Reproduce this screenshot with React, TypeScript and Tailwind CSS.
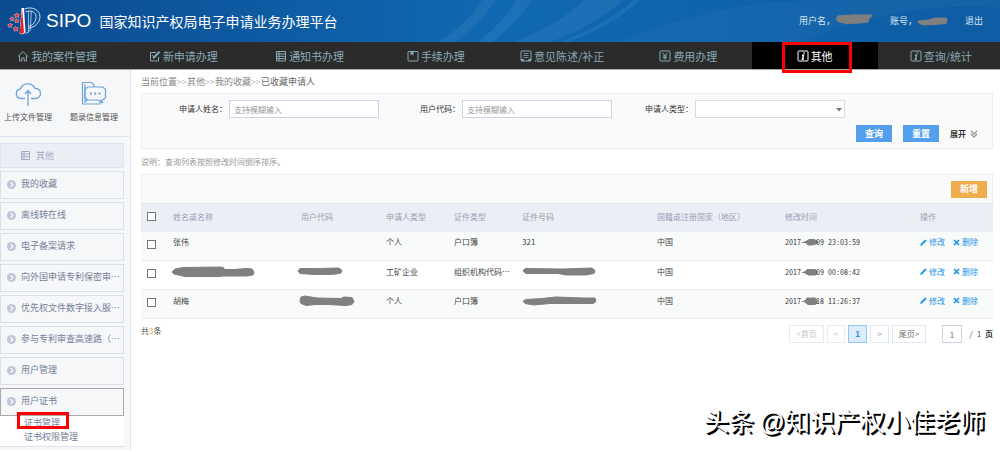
import React from "react";

type IconProps = { className?: string };

function NavIcon({ name }: { name: string }) {
  return (
    <svg viewBox="0 0 12 12" className="size-3 shrink-0" fill="none" stroke="currentColor" strokeWidth="1" aria-hidden="true">
      {name === "home" && <path d="M1 6.5 6 1.5l5 5M2.5 5.5v5.5h2.3V8h2.4v3h2.3V5.5" />}
      {name === "edit" && (
        <>
          <path d="M7 2.500H1.500v8.500h8V7" />
          <path d="M4.200 8.300 10.600 1.600" strokeWidth="2" />
          <path d="M3 5l2.500 3" />
        </>
      )}
      {name === "list" && <path d="M1.500 1.500h9v9.500h-9zM1.500 4h9M1.500 6.300h9M1.500 8.600h9M4 1.500v9.500" />}
      {name === "book" && (
        <>
          <rect x="1" y="1.500" width="10" height="9.500" rx="1" />
          <path d="M3.500 1.500h3v4L5 4.300 3.500 5.500z" fill="currentColor" stroke="none" />
        </>
      )}
      {name === "reply" && (
        <>
          <rect x="1" y="1" width="10" height="10" rx="1" />
          <path d="M3.500 3.500h5M3.500 5.500h5M3.500 7.500h5" strokeWidth="0.8" />
          <path d="M1 9h2.500l.8 2H1zM11 9H8.500l-.8 2H11z" fill="currentColor" stroke="none" />
        </>
      )}
      {name === "fee" && (
        <>
          <rect x="1" y="1" width="10" height="10" rx="1" />
          <path d="M3.500 2.800 6 5.600l2.500-2.800M6 5.600v4M3.800 6h4.400M3.800 7.800h4.400" />
        </>
      )}
      {name === "info" && (
        <>
          <rect x="1" y="1" width="10" height="10" rx="1" />
          <path d="M7.300 2.300 7 3.700M5 5.200h1.500L5.500 9.300h1.300" strokeWidth="1.500" />
        </>
      )}
    </svg>
  );
}

function Logo({ className }: IconProps) {
  return (
    <svg viewBox="0 0 36 30" className={className} aria-hidden="true">
      <g fill="none" stroke="#cfe2f5" strokeWidth="1">
        <path d="M18 2c8-3 16 1 16 8 0 6-5 11-12 12" />
        <path d="M19 5c6-2 11 0 11 5 0 5-3 9-8 10" />
        <path d="M22 4v22c-1 1-3 1-4 1M25 4l-1 20-3 3" strokeWidth="0.8" />
      </g>
      <path d="M15 1h2.500l1.500 24c-1 3-4 3.500-6 3z" fill="#fff" />
      <path d="M15.500 2 17.500 26c-1 2-3 2-4.500 1.500z" fill="#e8202c" />
      <g fill="#ee2b36" stroke="#fff" strokeWidth="0.4">
        <path d="m10 6 1 1.600 1.900.2-1.300 1.300.4 1.900-2-.8-1.600 1 .1-1.900-1.500-1.200 1.900-.5z" />
        <path d="m5 10 .9 1.300 1.500.2-1 1.100.2 1.500-1.500-.6-1.300.8v-1.500l-1.200-1 1.500-.4z" />
        <path d="m10 12 .9 1.300 1.500.2-1 1.100.2 1.500-1.500-.6-1.300.8v-1.500l-1.200-1 1.500-.4z" />
        <path d="m3 16.500 1 1.400 1.600.2-1 1.200.2 1.600-1.600-.6-1.500.8.100-1.600-1.300-1.100 1.600-.4z" />
        <path d="m9 20 1 1.600 1.900.2-1.300 1.300.4 1.900-2-.8-1.600 1 .1-1.900-1.500-1.200 1.900-.5z" />
      </g>
    </svg>
  );
}

function Scribble({ d, box, className }: { d: string; box: string; className: string }) {
  return (
    <svg viewBox={box} className={className} fill="#808080" stroke="#808080" strokeLinejoin="round" strokeWidth="1" overflow="visible" aria-hidden="true">
      <path d={d} />
    </svg>
  );
}

const dateMarks = [
  "M1 5 4 4 6 2.500h5l3 1.500 1 1.500-2 1.500L9 8H5L3.500 6 1 5.500z",
  "M1 5 3 4 4 2.500h8l2 1.500v3l-2 1H5L3 6.500 1 5.500z",
  "M1 5 3 4 4 2h8l2 2v3l-2 1.500H5L3 7 1 5.500z",
];

const navItems = [
  { icon: "home", label: "我的案件管理" },
  { icon: "edit", label: "新申请办理" },
  { icon: "list", label: "通知书办理" },
  { icon: "book", label: "手续办理" },
  { icon: "reply", label: "意见陈述/补正" },
  { icon: "fee", label: "费用办理" },
  { icon: "info", label: "其他", active: true },
  { icon: "info", label: "查询/统计" },
];

const sideItems = [
  "我的收藏",
  "离线转在线",
  "电子备案请求",
  "向外国申请专利保密审…",
  "优先权文件数字接入服…",
  "参与专利审查高速路（…",
  "用户管理",
  "用户证书",
];

type Row = { name: React.ReactNode; code: React.ReactNode; type: string; idType: string; idNo: React.ReactNode; end: string };

const rows: Row[] = [
  { name: "张伟", code: "", type: "个人", idType: "户口簿", idNo: "321", end: "09 23:03:59" },
  {
    name: <Scribble box="0 0 84 12" className="-ml-0.5 block h-3 w-[84px]" d="M1 6 4 3 12 1.500 50 1l3 1v1.500l10 0 12-1 6 .5 2 3-1 3-6 1-24 0-3 .5H14L3 8z" />,
    code: <Scribble box="0 0 46 9" className="-ml-1 block h-[9px] w-[46px]" d="M1 4 3 1.500 20 1.500 42 1l3 2.500-1 2.500-5 1-8 .5H18L3 6.500z" />,
    type: "工矿企业",
    idType: "组织机构代码…",
    idNo: <Scribble box="0 0 74 9" className="block h-[9px] w-[74px]" d="M1 4 3 1.500 40 2 70 1l3 2.500-1 3-8 1.500H44L36 6.500 4 6.500z" />,
    end: "09 00:08:42",
  },
  {
    name: "胡梅",
    code: <Scribble box="0 0 56 12" className="-ml-0.5 block h-3 w-[56px]" d="M1 6 2 2 6 1 18 3l24 .5 3-1.500 8 .5 2 4-2 3-6 1-18-1H16l-9 1-5-2z" />,
    type: "个人",
    idType: "户口簿",
    idNo: <Scribble box="0 0 75 10" className="block h-2.5 w-[75px]" d="M1 5 4 3.500 20 2.500 34 1l28 1 11 0 1 3.500-3 2-22 0H28L12 9 3 7.500z" />,
    end: "18 11:26:37",
  },
];

const colClasses = ["w-[32px]", "w-[128px]", "w-[85px]", "w-[68px]", "w-[68px]", "w-[135px]", "w-[128px]", "w-[135px]", "w-[73px]"];
const headings = ["姓名或名称", "用户代码", "申请人类型", "证件类型", "证件号码", "国籍或注册国家（地区）", "修改时间", "操作"];

function Check({ label }: { label: string }) {
  return <input type="checkbox" aria-label={label} className="ml-1.5 block size-[9px] appearance-none border border-[#777] bg-white checked:bg-[#5aa3ee]" />;
}

function TextField({ id, label }: { id: string; label: string }) {
  return (
    <div className="flex items-center">
      <label htmlFor={id} className="w-[83px] shrink-0 pr-0.5 text-right text-[#333]">
        {label}
      </label>
      <input id={id} placeholder="支持模糊输入" className="h-[18px] w-full min-w-0 border border-[#ccd3e4] bg-white px-1 placeholder:text-[#999]" />
    </div>
  );
}

export default function App() {
  return (
    <div className="relative min-h-[452px] overflow-hidden bg-white font-['Noto_Sans_CJK_SC','Liberation_Sans',sans-serif] text-[8px] leading-3 text-[#555]">
      <header className="relative flex h-[42px] items-center bg-linear-to-r from-[#0b4b90] via-[#1069b2] to-[#0e5ca3] pr-[17px] pl-[7px] text-white">
        <svg viewBox="0 0 1000 42" preserveAspectRatio="none" className="absolute inset-0 size-full" aria-hidden="true">
          <g fill="#fff" fillOpacity="0.06">
            <path d="M438 42Q468 24 482 0h14Q478 26 456 42z" />
            <path d="M478 42Q504 22 516 0h16Q512 28 492 42z" />
            <path d="M515 42Q560 24 584 0h40Q590 28 550 42z" />
            <path d="M560 42Q610 22 634 0h6Q612 26 568 42z" />
            <path d="M620 42Q720 0 820 0h180v8Q900 0 800 42z" fillOpacity="0.03" />
          </g>
        </svg>
        <div className="relative flex flex-1 items-center">
          <Logo className="h-[29px] w-[35px]" />
          <span className="ml-1 font-['Liberation_Sans',sans-serif] text-[19px] leading-6">SIPO</span>
          <h1 className="ml-2 text-[14px] leading-6">国家知识产权局电子申请业务办理平台</h1>
        </div>
        <div className="relative flex items-center text-[9px] leading-3 text-[#d7e6f4]">
          <span>用户名，</span>
          <Scribble box="0 0 38 11" className="-mt-1 h-[11px] w-[38px]" d="M1 5 3 2 18 1l18 0 1 1-3 2-1 4-8 1-14 .5-8-2z" />
          <span className="ml-[17px]">账号，</span>
          <Scribble box="0 0 31 9" className="h-[9px] w-[31px]" d="M1 4 12 3 18 1 29 1l1 1.500-1 4-12 1-11 .5-4-2z" />
          <a href="#logout" className="ml-[17px]">退出</a>
        </div>
      </header>

      <nav className="h-7 border-b border-[#aaa] bg-[#2b2b2b] text-[11px]">
        <ul className="-mr-1 -ml-1.5 flex h-full">
          {navItems.map((item) => (
            <li key={item.label} className="relative flex-1">
              <a href="#nav" className={item.active ? "flex h-full items-center justify-center gap-0.5 bg-black text-white" : "flex h-full items-center justify-center gap-0.5 text-[#88a9b3]"}>
                <NavIcon name={item.icon} />
                <span>{item.label}</span>
              </a>
              {item.active && <span className="pointer-events-none absolute -bottom-1 top-0 left-[30px] right-[26px] z-10 border-3 border-[#f00]" />}
            </li>
          ))}
        </ul>
      </nav>

      <div className="flex items-start">
        <aside className="w-[131px] shrink-0 border-r border-[#e1e4ee] bg-[#f5f7f8]">
          <div className="flex h-[67px] justify-between border-b border-[#dfe3ed] pt-[11px] pr-3 pl-1">
            <a href="#upload" className="flex flex-col items-center gap-1 text-[#555]">
              <svg viewBox="0 0 26 26" className="size-[26px]" fill="none" stroke="#6fa3dc" strokeWidth="1.300" aria-hidden="true">
                <path d="M10 17.500H6a4.800 4.800 0 0 1-.8-9.500A8 8 0 0 1 20 7.500a5 5 0 0 1 1 10h-5M13 25V10M10 13l3-3.500 3 3.500" />
              </svg>
              <span>上传文件管理</span>
            </a>
            <a href="#records" className="flex flex-col items-center gap-1 text-[#555]">
              <svg viewBox="0 0 26 26" className="size-[26px]" fill="none" stroke="#6fa3dc" strokeWidth="1.200" aria-hidden="true">
                <path d="M13 6V4l-2.500-2.500h-9V23H19v-2.500M4 21.500l2-3M4 21.500V3" />
                <path d="M6.500 6H22l2.500 2.500v8L22 19h-2l2 3-5-3H6.500L4 16.500v-8z" />
                <path d="M9 12.500h2M13.200 12.500h2M17.500 12.500h2" strokeWidth="2" />
              </svg>
              <span>题录信息管理</span>
            </a>
          </div>
          <div className="flex flex-col gap-[3px] pt-1.5 pr-1.5 pb-[3px] text-[9px] text-[#77809a]">
            <h2 className="flex h-[25px] items-center gap-1.5 border border-[#dfe3ee] bg-[#ebeff5] pl-5 text-[#a3abc2]">
              <svg viewBox="0 0 9 9" className="size-[9px]" fill="none" stroke="currentColor" aria-hidden="true">
                <path d="M.5.5h8v8h-8zM.5 3h8M.5 5.700h8M3 .5v8" />
              </svg>
              其他
            </h2>
            {sideItems.map((label, i) => (
              <div key={label}>
                <button type="button" className={i === sideItems.length - 1 ? "flex h-7 w-full items-center gap-[5px] border border-[#aaa] pb-0.5 pl-1.5 text-left" : "flex h-7 w-full items-center gap-[5px] border border-[#dcdfea] pb-0.5 pl-1.5 text-left"}>
                  <svg viewBox="0 0 9 9" className="size-[9px] shrink-0" aria-hidden="true">
                    <circle cx="4.500" cy="4.500" r="4.500" fill="#c0c6d6" />
                    <path d="M3.500 2.200 5.800 4.500 3.500 6.800" fill="none" stroke="#fff" strokeWidth="1.200" />
                  </svg>
                  <span className="whitespace-nowrap">{label}</span>
                </button>
                {i === sideItems.length - 1 && (
                  <ul className="border-b border-[#dfe3ee] bg-white pb-0.5 pl-6 leading-[14px]">
                    <li className="relative">
                      <a href="#cert">证书管理</a>
                      <span className="pointer-events-none absolute -top-1 -left-[7px] h-[17px] w-[52px] border-3 border-[#f00]" />
                    </li>
                    <li>
                      <a href="#perm">证书权限管理</a>
                    </li>
                  </ul>
                )}
              </div>
            ))}
          </div>
        </aside>

        <main className="min-w-0 flex-1 pt-1.5 pr-[7px] pl-2.5">
          <div className="flex text-[9px] text-[#888]">
            <span>当前位置</span>
            <span><span className="text-[#bbb]">&gt;&gt;</span>其他</span>
            <span><span className="text-[#bbb]">&gt;&gt;</span>我的收藏</span>
            <span className="text-[#666]"><span className="text-[#bbb]">&gt;&gt;</span>已收藏申请人</span>
          </div>

          <form className="mt-[5px] h-14 border border-[#ececf0] bg-[#fafafa] pt-1.5" onSubmit={(e) => e.preventDefault()}>
            <div className="grid grid-cols-[233fr_233fr_233fr_147fr] pl-1">
              <TextField id="applicant" label="申请人姓名：" />
              <TextField id="usercode" label="用户代码：" />
              <div className="flex items-center">
                <label htmlFor="kind" className="w-[83px] shrink-0 pr-0.5 text-right text-[#333]">申请人类型：</label>
                <div className="relative flex-1">
                  <select id="kind" className="block h-[18px] w-full appearance-none border border-[#ddd] bg-white" />
                  <svg viewBox="0 0 6 4" className="pointer-events-none absolute top-[8px] right-[3px] h-1 w-1.5" aria-hidden="true">
                    <path d="M0 0h6L3 3.500z" fill="#777" />
                  </svg>
                </div>
              </div>
            </div>
            <div className="mt-[7px] flex items-center justify-end pr-3.5 font-bold">
              <button type="submit" className="h-[17px] w-9 bg-[#549fec] text-[9px] text-white">查询</button>
              <button type="reset" className="ml-[11px] h-[17px] w-9 bg-[#549fec] text-[9px] text-white">重置</button>
              <button type="button" className="ml-[11px] flex items-center gap-1 text-[#333]">
                展开
                <svg viewBox="0 0 8 8" className="size-2" fill="none" stroke="#999" strokeWidth="1.300" aria-hidden="true">
                  <path d="M1 1l3 3 3-3M1 4l3 3 3-3" />
                </svg>
              </button>
            </div>
          </form>

          <p className="mt-[7px] text-[#999]">说明：查询列表按照修改时间倒序排序。</p>

          <div className="mt-1.5 flex h-[29px] items-center justify-end border border-b-0 border-[#ececf0] bg-[#fafafa] pr-[5px]">
            <button type="button" className="h-[17px] w-9 bg-[#f0ad4e] text-[9px] font-bold text-white">新增</button>
          </div>
          <table className="w-full table-fixed border-collapse text-left">
            <colgroup>
              {colClasses.map((c, i) => (
                <col key={i} className={c} />
              ))}
            </colgroup>
            <thead>
              <tr className="h-7 border-t border-[#dfe3ea] bg-[#ebeff5] text-[#99a0b5]">
                <th className="p-0 pb-0.5"><Check label="全选" /></th>
                {headings.map((h) => (
                  <th key={h} className="p-0 pb-0.5 font-normal whitespace-nowrap">{h}</th>
                ))}
              </tr>
            </thead>
            <tbody>
              {rows.map((r, i) => (
                <tr key={i} className="h-[29px] border-b border-[#e6e9ee] text-[#444] odd:bg-[#f9fafa] *:p-0 *:pb-[7px]">
                  <td><div className="pt-1"><Check label={"选择第" + (i + 1) + "行"} /></div></td>
                  <td>{r.name}</td>
                  <td>{r.code}</td>
                  <td>{r.type}</td>
                  <td className="whitespace-nowrap">{r.idType}</td>
                  <td>{r.idNo}</td>
                  <td>中国</td>
                  <td className="font-['Noto_Sans_Mono_CJK_SC','Liberation_Mono',monospace]">
                    <div className="flex items-center whitespace-nowrap">
                      <span>2017-</span>
                      <Scribble box="0 0 15 10" className="-mx-0.5 h-2.5 w-[15px]" d={dateMarks[i]} />
                      <span>{r.end}</span>
                    </div>
                  </td>
                  <td className="text-[#1e96e8]">
                    <div className="flex items-center gap-2 whitespace-nowrap">
                      <a href="#edit" className="flex items-center gap-0.5">
                        <svg viewBox="0 0 7 7" className="size-[7px]" aria-hidden="true">
                          <path d="M0 7 .8 4.800 5.200.4 6.700 1.800 2.200 6.200z" fill="currentColor" />
                        </svg>
                        修改
                      </a>
                      <a href="#delete" className="flex items-center gap-0.5">
                        <svg viewBox="0 0 7 7" className="size-[7px]" fill="none" stroke="currentColor" strokeWidth="1.700" aria-hidden="true">
                          <path d="M1 1l5 5M6 1 1 6" />
                        </svg>
                        删除
                      </a>
                    </div>
                  </td>
                </tr>
              ))}
            </tbody>
          </table>

          <div className="mt-1.5 flex items-start">
            <p className="flex-1">共<span className="text-[#f0a030]">3</span>条</p>
            <div className="flex items-center gap-[3px]">
              <button type="button" disabled className="h-[18px] w-[35px] border border-[#e8eaf2] text-[#c4c4c4]">&lt;首页</button>
              <button type="button" disabled className="h-[18px] w-[18px] border border-[#e8eaf2] text-[#c4c4c4]">&lt;</button>
              <button type="button" className="h-[18px] w-[19px] border border-[#93c5f5] bg-[#dcecfc] font-bold text-[#1e90d8]">1</button>
              <button type="button" className="h-[18px] w-[19px] border border-[#dfe7f5] text-[#888]">&gt;</button>
              <button type="button" className="h-[18px] w-[34px] border border-[#dfe7f5] text-[#777]">尾页&gt;</button>
              <input aria-label="页码" defaultValue="1" className="ml-[13px] h-[18px] w-5 border border-[#ccd0e2] text-center text-[#777]" />
              <span className="ml-1 font-['Noto_Sans_Mono_CJK_SC','Liberation_Mono',monospace]">/ 1 <b className="text-[#333]">页</b></span>
            </div>
          </div>
        </main>
      </div>

      <div className="pointer-events-none absolute right-[15px] bottom-3 text-[25px] leading-9 whitespace-nowrap text-white [text-shadow:1px_1px_0_#000,2px_2px_0_#000]">
        头条 <span className="font-['Liberation_Sans',sans-serif]">@</span>知识产权小佳老师
      </div>
    </div>
  );
}
